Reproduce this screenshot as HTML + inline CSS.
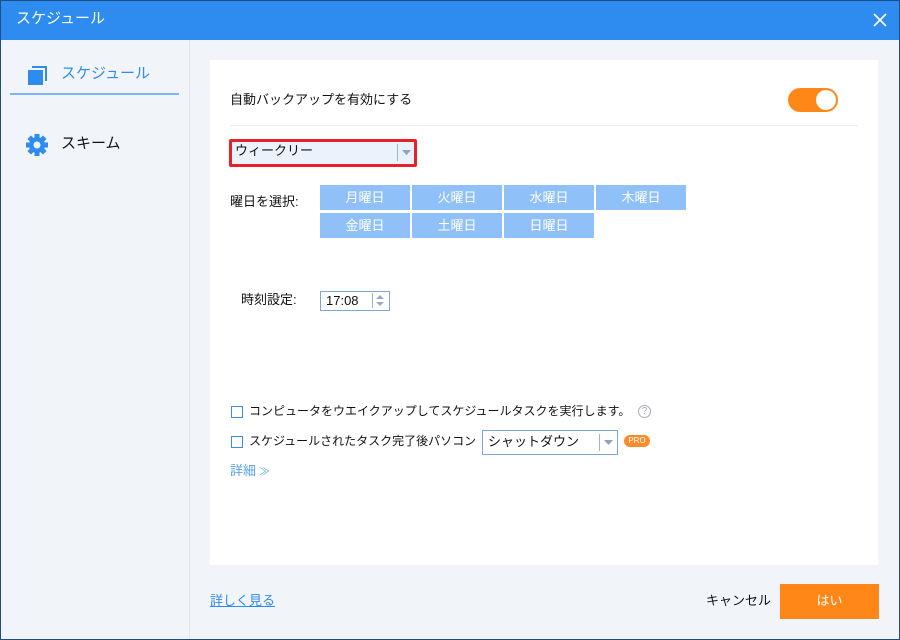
<!DOCTYPE html>
<html><head><meta charset="utf-8"><style>
*{margin:0;padding:0;box-sizing:border-box}
body{width:900px;height:640px;overflow:hidden;font-family:"Liberation Sans","Noto Sans CJK JP",sans-serif;font-size:13px;line-height:1.2;color:#111;background:#f1f4f9;position:relative}
.a{position:absolute}
#frame{left:0;top:0;width:900px;height:640px;border:1px solid #1d4f86;}
#title{left:0;top:0;width:900px;height:40px;background:#2e8cf0;color:#fff;font-size:15px;line-height:38px;padding-left:16px}
.day{position:absolute;width:90px;height:25px;background:#90c0f8;color:#fff;text-align:center;line-height:25px;font-size:13px}
.cb{width:12px;height:12px;border:1px solid #3d8ce8;background:#fff}
</style></head><body>
<div class="a" id="title">スケジュール</div>
<svg class="a" style="left:873px;top:13px" width="14" height="14"><path d="M1 1L13 13M13 1L1 13" stroke="#fff" stroke-width="1.6"/></svg>
<div class="a" style="left:189px;top:40px;width:1px;height:600px;background:#dfe3ea"></div>
<div class="a" style="left:28px;top:66px;width:19px;height:19px">
<div class="a" style="left:4px;top:0;width:15px;height:15px;border-top:2px solid #2e8cf0;border-right:2px solid #2e8cf0"></div>
<div class="a" style="left:0;top:4px;width:15px;height:15px;background:#2e8cf0"></div></div>
<div class="a" style="left:61px;top:65px;font-size:15px;color:#2e8cf0">スケジュール</div>
<div class="a" style="left:10px;top:93px;width:169px;height:2px;background:#7db4f4"></div>
<svg class="a" style="left:26px;top:134px" width="22" height="22" viewBox="0 0 22 22"><g fill="#2e8cf0"><circle cx="11" cy="11" r="8"/><g><rect x="8.5" y="0" width="5" height="5"/><rect x="8.5" y="17" width="5" height="5"/><rect x="0" y="8.5" width="5" height="5"/><rect x="17" y="8.5" width="5" height="5"/></g><g transform="rotate(45 11 11)"><rect x="8.5" y="0" width="5" height="5"/><rect x="8.5" y="17" width="5" height="5"/><rect x="0" y="8.5" width="5" height="5"/><rect x="17" y="8.5" width="5" height="5"/></g></g><circle cx="11" cy="11" r="3.5" fill="#f1f4f9"/></svg>
<div class="a" style="left:61px;top:135px;font-size:15px">スキーム</div>
<div class="a" style="left:210px;top:60px;width:668px;height:505px;background:#fff"></div>
<div class="a" style="left:230px;top:92px">自動バックアップを有効にする</div>
<div class="a" style="left:788px;top:88px;width:50px;height:24px;border-radius:12px;background:#ff8717"></div>
<div class="a" style="left:816px;top:90px;width:20px;height:20px;border-radius:10px;background:#fff"></div>
<div class="a" style="left:230px;top:125px;width:628px;height:1px;background:#eceef2"></div>
<div class="a" style="left:229px;top:139px;width:188px;height:28px;border:3px solid #e8202a;border-radius:2px;background:#eaf2fc"></div>
<div class="a" style="left:235px;top:143px">ウィークリー</div>
<div class="a" style="left:397px;top:144px;width:1px;height:17px;background:#9bb"></div>
<svg class="a" style="left:402px;top:150px" width="9" height="5"><path d="M0 0H9L4.5 5Z" fill="#8aa4c4"/></svg>
<div class="a" style="left:230px;top:194px">曜日を選択:</div>
<div class="day" style="left:320px;top:185px">月曜日</div>
<div class="day" style="left:412px;top:185px">火曜日</div>
<div class="day" style="left:504px;top:185px">水曜日</div>
<div class="day" style="left:596px;top:185px">木曜日</div>
<div class="day" style="left:320px;top:213px">金曜日</div>
<div class="day" style="left:412px;top:213px">土曜日</div>
<div class="day" style="left:504px;top:213px">日曜日</div>
<div class="a" style="left:241px;top:292px">時刻設定:</div>
<div class="a" style="left:320px;top:291px;width:70px;height:20px;border:1px solid #7ba6dc;background:#fff"></div>
<div class="a" style="left:326px;top:293px">17:08</div>
<div class="a" style="left:372px;top:293px;width:1px;height:15px;background:#9bb"></div>
<svg class="a" style="left:376px;top:294px" width="8" height="13"><path d="M0 5L4 1L8 5ZM0 8L4 12L8 8Z" fill="#9ab"/></svg>
<div class="a cb" style="left:231px;top:406px"></div>
<div class="a" style="left:249px;top:404px;font-size:12px">コンピュータをウエイクアップしてスケジュールタスクを実行します。</div>
<div class="a" style="left:638px;top:405px;width:13px;height:13px;border:1px solid #aab;border-radius:7px;color:#aab;font-size:10px;line-height:11px;text-align:center">?</div>
<div class="a cb" style="left:231px;top:436px"></div>
<div class="a" style="left:249px;top:434px;font-size:12px">スケジュールされたタスク完了後パソコン</div>
<div class="a" style="left:482px;top:430px;width:136px;height:25px;border:1px solid #7ba6dc;background:#fff"></div>
<div class="a" style="left:488px;top:434px">シャットダウン</div>
<div class="a" style="left:599px;top:434px;width:1px;height:17px;background:#9bb"></div>
<svg class="a" style="left:604px;top:440px" width="9" height="5"><path d="M0 0H9L4.5 5Z" fill="#8aa4c4"/></svg>
<div class="a" style="left:624px;top:435px;width:26px;height:12px;border-radius:6px;background:#ff8a2a;color:#fff;font-size:8px;line-height:12px;text-align:center">PRO</div>
<div class="a" style="left:230px;top:463px;color:#5aa0ee">詳細 <span style="font-size:10px">≫</span></div>
<div class="a" style="left:210px;top:593px;color:#2e8cf0;text-decoration:underline">詳しく見る</div>
<div class="a" style="left:706px;top:593px">キャンセル</div>
<div class="a" style="left:780px;top:584px;width:99px;height:35px;background:#ff8717;color:#fff;text-align:center;line-height:33px">はい</div>
<div class="a" id="frame"></div>
</body></html>
